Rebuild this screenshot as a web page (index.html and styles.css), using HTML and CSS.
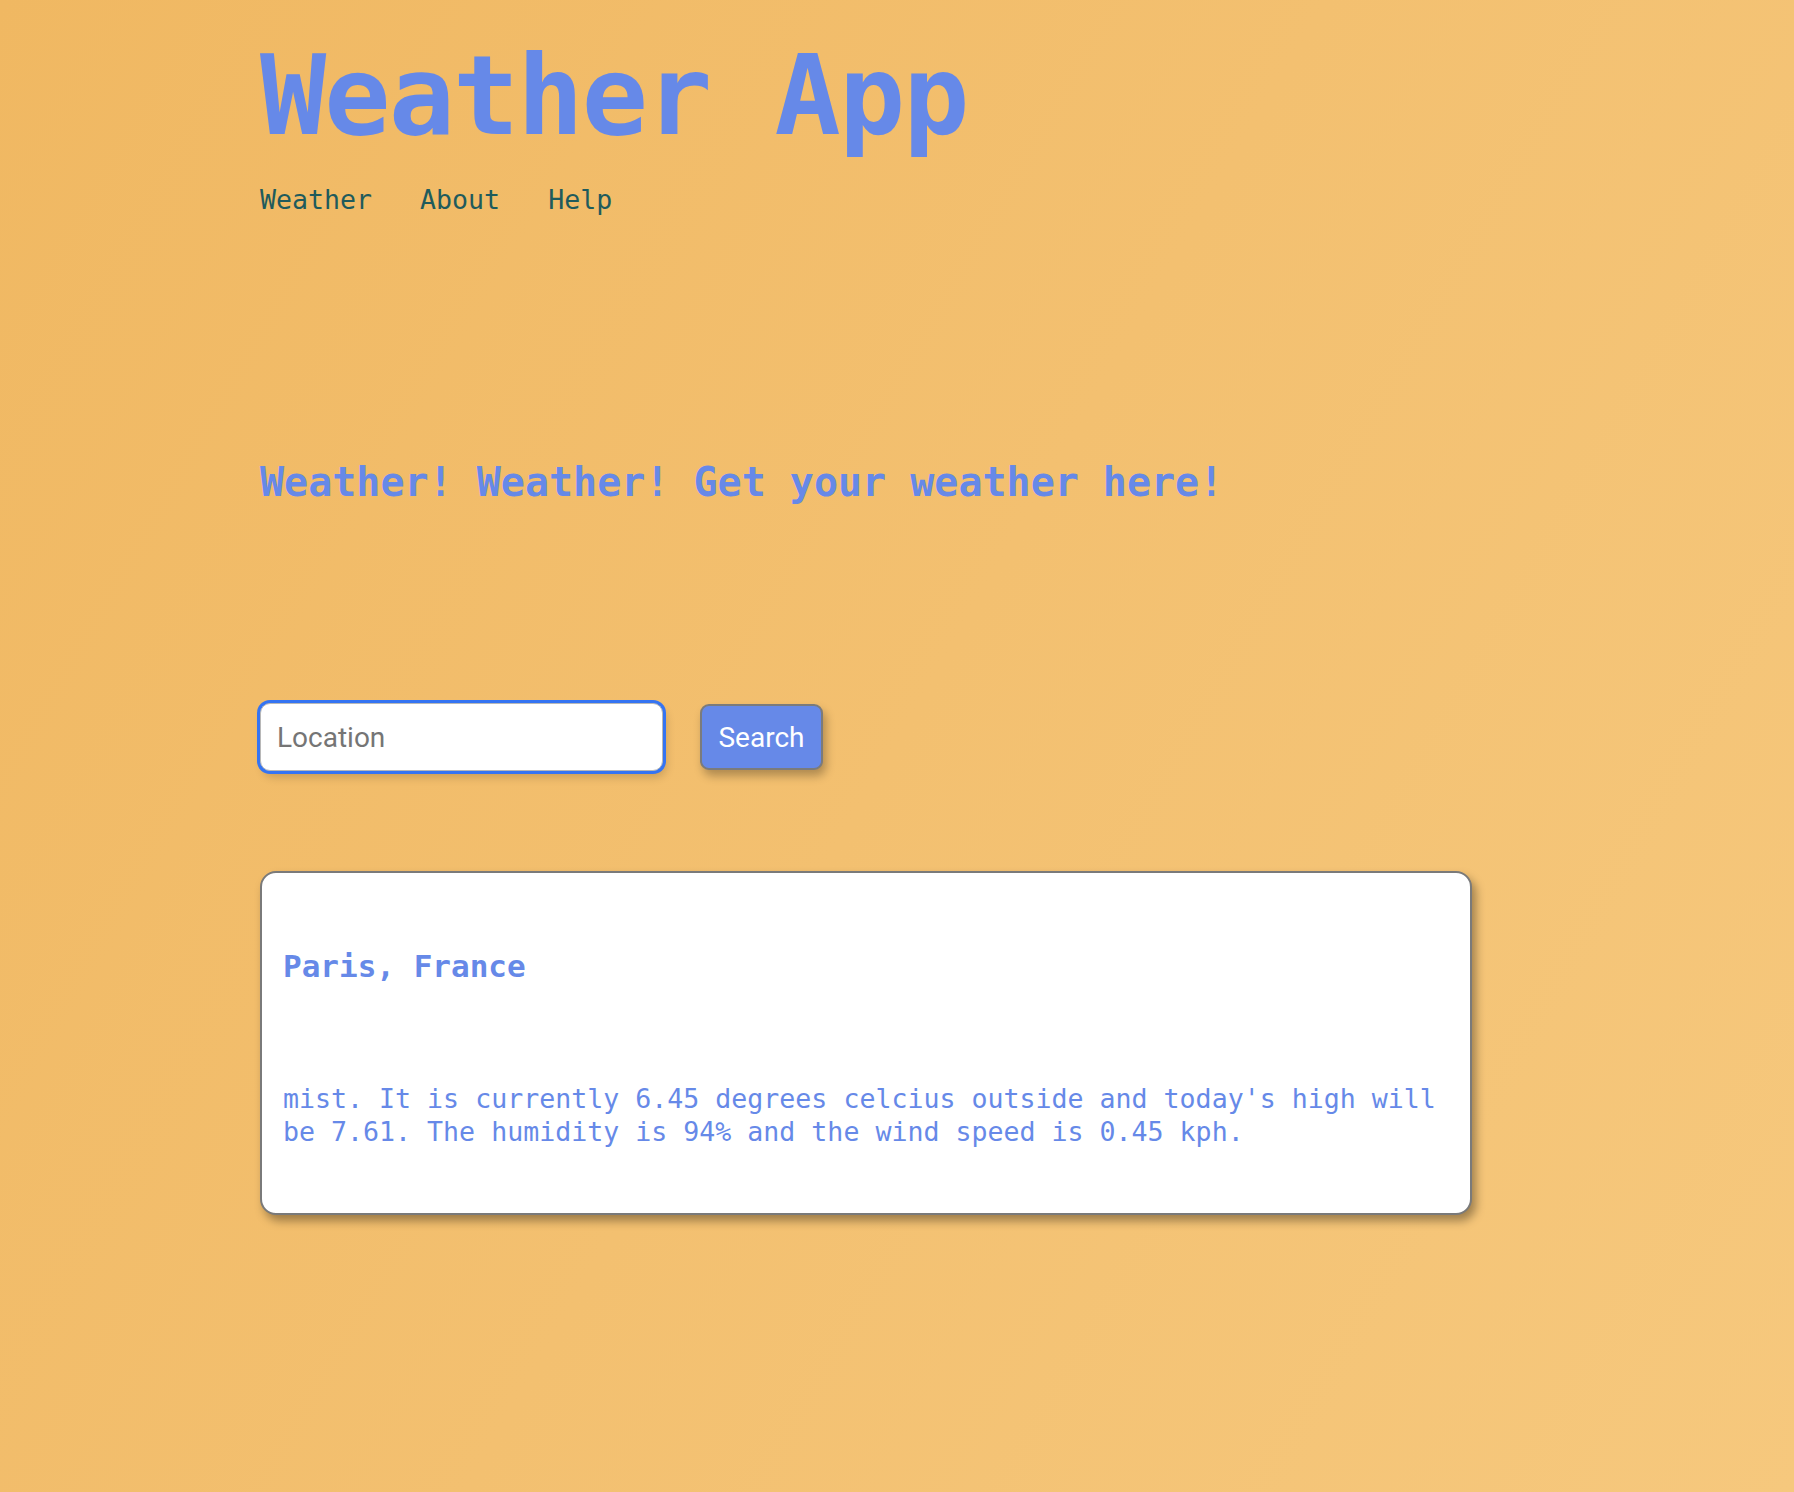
FILE: index.html
```html
<!DOCTYPE html>
<html lang="en">
<head>
<meta charset="utf-8">
<title>Weather App</title>
<link rel="stylesheet" href="styles.css">
</head>
<body>
<div class="page">
  <header class="header">
    <h1 class="title">Weather App</h1>
    <nav class="nav">
      <a class="nav-link" href="#">Weather</a>
      <a class="nav-link" href="#">About</a>
      <a class="nav-link" href="#">Help</a>
    </nav>
  </header>
  <main class="main">
    <h2 class="tagline">Weather! Weather! Get your weather here!</h2>
    <form class="search">
      <input class="search-input" type="text" placeholder="Location" autofocus>
      <button class="search-button" type="button">Search</button>
    </form>
    <section class="card">
      <h3 class="card-title">Paris, France</h3>
      <p class="card-text">mist. It is currently 6.45 degrees celcius outside and today's high will be 7.61. The humidity is 94% and the wind speed is 0.45 kph.</p>
    </section>
  </main>
</div>
</body>
</html>
```

FILE: styles.css
```css
* {
  box-sizing: border-box;
}

html, body {
  margin: 0;
  padding: 0;
}

body {
  min-height: 1492px;
  background: linear-gradient(120deg, #f0b862 0%, #f3c070 50%, #f6c87d 100%);
  font-family: "DejaVu Sans Mono", "Liberation Mono", monospace;
  color: #6689e8;
}

.page {
  padding-left: 260px;
}

.title {
  margin: 0;
  padding-top: 42px;
  font-size: 110px;
  line-height: 108px;
  letter-spacing: -1.9px;
  font-weight: bold;
  color: #6689e8;
  white-space: nowrap;
}

.nav {
  display: flex;
  gap: 48px;
  margin-top: 34px;
}

.nav-link {
  font-size: 26.6px;
  line-height: 32px;
  color: #1f5b5c;
  text-decoration: none;
}

.tagline {
  margin: 242px 0 0;
  font-size: 40px;
  line-height: 48px;
  font-weight: bold;
  color: #6689e8;
}

.search {
  display: flex;
  align-items: center;
  gap: 37px;
  margin-top: 197px;
}

.search-input {
  width: 403px;
  height: 68px;
  margin: 0;
  padding: 0 16px;
  border: 1px solid #b8b8b8;
  border-radius: 10px;
  background: #fff;
  outline: none;
  box-shadow: 0 0 0 3px #3574f2, 3px 6px 10px rgba(0, 0, 0, 0.18);
  font-family: Roboto, "Liberation Sans", sans-serif;
  font-size: 28px;
  color: #222;
  caret-color: #000;
}

.search-input::placeholder {
  color: #757575;
}

.search-button {
  width: 123px;
  height: 66px;
  margin: 0;
  padding: 0;
  border: 2px solid #7b7b7b;
  border-radius: 9px;
  background: #6689e8;
  color: #fff;
  font-family: Roboto, "Liberation Sans", sans-serif;
  font-size: 28px;
  box-shadow: 3px 6px 10px rgba(0, 0, 0, 0.28);
}

.card {
  width: 1212px;
  height: 344px;
  margin-top: 100px;
  padding: 0 21px;
  border: 2px solid #7a7a7a;
  border-radius: 16px;
  background: #fff;
  box-shadow: 4px 6px 10px rgba(0, 0, 0, 0.35);
}

.card-title {
  margin: 73px 0 0;
  font-size: 31px;
  line-height: 40px;
  font-weight: bold;
  color: #6689e8;
}

.card-text {
  margin: 96px 0 0;
  font-size: 26.6px;
  line-height: 33px;
  color: #6689e8;
}
```
